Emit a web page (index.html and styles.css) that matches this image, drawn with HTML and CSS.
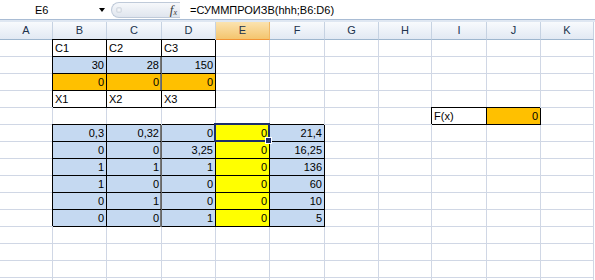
FILE: index.html
```html
<!DOCTYPE html>
<html lang="ru">
<head>
    <meta charset="UTF-8">
    <title>Лист1</title>
    <link rel="stylesheet" href="styles.css">
</head>
<body>
    <!-- Formula bar -->
    <div class="formula-bar">
        <div class="name-box"><span>E6</span><span class="arrow"></span></div>
        <div class="fx-btn"><span class="grip"></span><span class="fx"><i>f</i><sub>x</sub></span></div>
        <div class="formula">=СУММПРОИЗВ(hhh;B6:D6)</div>
    </div>

    <!-- Sheet -->
    <table class="sheet">
        <tr class="head">
            <th class="w53">A</th><th class="w54">B</th><th class="w55">C</th><th class="w54">D</th><th class="w54 active">E</th><th class="w55">F</th>
            <th class="w54">G</th><th class="w53">H</th><th class="w55">I</th><th class="w54">J</th><th class="w53">K</th>
        </tr>
        <tr>
            <td></td><td class="bx">C1</td><td class="bx">C2</td><td class="bx">C3</td>
            <td></td><td></td><td></td><td></td><td></td><td></td><td></td>
        </tr>
        <tr>
            <td></td><td class="bx blue num">30</td><td class="bx blue num">28</td><td class="bx blue num cut">150</td>
            <td></td><td></td><td></td><td></td><td></td><td></td><td></td>
        </tr>
        <tr>
            <td></td><td class="bx orange num">0</td><td class="bx orange num">0</td><td class="bx orange num cut">0</td>
            <td></td><td></td><td></td><td></td><td></td><td></td><td></td>
        </tr>
        <tr>
            <td></td><td class="bx">X1</td><td class="bx">X2</td><td class="bx">X3</td>
            <td></td><td></td><td></td><td></td><td></td><td></td><td></td>
        </tr>
        <tr>
            <td></td><td></td><td></td><td></td><td></td><td></td><td></td><td></td>
            <td class="bx">F(x)</td><td class="bx orange num">0</td><td></td>
        </tr>
        <tr>
            <td></td><td class="bx blue num">0,3</td><td class="bx blue num">0,32</td><td class="bx blue num cut">0</td>
            <td class="bx yellow num current">0<div class="sel"><div class="handle"></div></div></td><td class="bx blue num">21,4</td>
            <td></td><td></td><td></td><td></td><td></td>
        </tr>
        <tr>
            <td></td><td class="bx blue num">0</td><td class="bx blue num">0</td><td class="bx blue num cut">3,25</td>
            <td class="bx yellow num">0</td><td class="bx blue num">16,25</td>
            <td></td><td></td><td></td><td></td><td></td>
        </tr>
        <tr>
            <td></td><td class="bx blue num">1</td><td class="bx blue num">1</td><td class="bx blue num cut">1</td>
            <td class="bx yellow num">0</td><td class="bx blue num">136</td>
            <td></td><td></td><td></td><td></td><td></td>
        </tr>
        <tr>
            <td></td><td class="bx blue num">1</td><td class="bx blue num">0</td><td class="bx blue num cut">0</td>
            <td class="bx yellow num">0</td><td class="bx blue num">60</td>
            <td></td><td></td><td></td><td></td><td></td>
        </tr>
        <tr>
            <td></td><td class="bx blue num">0</td><td class="bx blue num">1</td><td class="bx blue num cut">0</td>
            <td class="bx yellow num">0</td><td class="bx blue num">10</td>
            <td></td><td></td><td></td><td></td><td></td>
        </tr>
        <tr>
            <td></td><td class="bx blue num">0</td><td class="bx blue num">0</td><td class="bx blue num cut">1</td>
            <td class="bx yellow num">0</td><td class="bx blue num">5</td>
            <td></td><td></td><td></td><td></td><td></td>
        </tr>
        <tr>
            <td></td><td></td><td></td><td></td><td></td><td></td><td></td><td></td><td></td><td></td><td></td>
        </tr>
        <tr>
            <td></td><td></td><td></td><td></td><td></td><td></td><td></td><td></td><td></td><td></td><td></td>
        </tr>
        <tr>
            <td></td><td></td><td></td><td></td><td></td><td></td><td></td><td></td><td></td><td></td><td></td>
        </tr>
        <tr>
            <td></td><td></td><td></td><td></td><td></td><td></td><td></td><td></td><td></td><td></td><td></td>
        </tr>
    </table>
</body>
</html>
```

FILE: styles.css
```css
/* Global */
body {
    margin: 0;
    background: #fff;
    font-family: 'Liberation Sans', Arial, sans-serif;
    font-size: 11px;
    color: #000;
    overflow: hidden;
}

/* Formula bar */
.formula-bar {
    display: flex;
    align-items: center;
    height: 19px;
    background: #fff;
    border-bottom: 1px solid #a9bcd4;
    margin-bottom: 2px;
    box-shadow: 0 1px 0 #dfe7f2, 0 2px 0 #dfe7f2;
}

.name-box {
    width: 108px;
    box-sizing: border-box;
    display: flex;
    align-items: center;
    justify-content: space-between;
    padding: 0 3px 0 35px;
}

.arrow {
    width: 0;
    height: 0;
    border-left: 3px solid transparent;
    border-right: 3px solid transparent;
    border-top: 4px solid #000;
}

.fx-btn {
    margin-left: 3px;
    width: 69px;
    height: 16px;
    box-sizing: border-box;
    display: flex;
    align-items: center;
    justify-content: space-between;
    padding: 0 3px 0 4px;
    border: 1px solid #bfcad9;
    border-right: none;
    border-radius: 8px 0 0 8px;
    background: linear-gradient(#f6f8fb, #dfe5ee);
}

.grip {
    width: 6px;
    height: 6px;
    border-radius: 50%;
    background: radial-gradient(#ffffff, #b8c2cf);
}

.fx {
    font-family: 'Liberation Serif', serif;
    font-size: 13px;
    color: #3a3a3a;
}

.fx sub {
    font-size: 8px;
    font-style: italic;
    vertical-align: -1px;
}

.formula {
    padding-left: 10px;
}

/* Sheet */
.sheet {
    border-collapse: separate;
    border-spacing: 0;
    table-layout: fixed;
    width: 594px;
}

.sheet th,
.sheet td {
    box-sizing: border-box;
    padding: 0 2px;
    border-right: 1px solid #d0d7e5;
    border-bottom: 1px solid #d0d7e5;
    line-height: 16px;
    height: 17px;
    white-space: nowrap;
    overflow: visible;
    text-align: left;
    font-weight: normal;
}

.w53 { width: 53px; }
.w54 { width: 54px; }
.w55 { width: 55px; }

.head th {
    height: 18px;
    line-height: 17px;
    text-align: center;
    color: #20324c;
    background: linear-gradient(#f8fafd, #e2e9f3);
    border-right: 1px solid #c6d2e2;
    border-bottom: 1px solid #9eb6ce;
}

.head th.active {
    background: linear-gradient(#fbe3b0, #f4c56e);
    border-right-color: #f2b865;
    border-bottom-color: #f29536;
}

/* Boxed cells */
.sheet td.bx {
    border-right-color: #000;
    border-bottom-color: #000;
    box-shadow: -1px -1px 0 #000;
}

.sheet td.cut {
    box-shadow: 0 -1px 0 #000, -1px 0 0 #666, -2px 0 0 #777;
}

.num { text-align: right !important; }
.blue { background: #c5d9f1; }
.orange { background: #ffc000; }
.yellow { background: #ffff00; }

/* Active cell */
.current {
    position: relative;
}

.sel {
    position: absolute;
    left: -2px;
    top: -2px;
    right: -1px;
    bottom: -1px;
    border: 2px solid #1d2f6b;
    pointer-events: none;
}

.handle {
    position: absolute;
    right: -4px;
    bottom: -4px;
    width: 5px;
    height: 5px;
    background: #1d2f6b;
    border: 1px solid #fff;
}
```
